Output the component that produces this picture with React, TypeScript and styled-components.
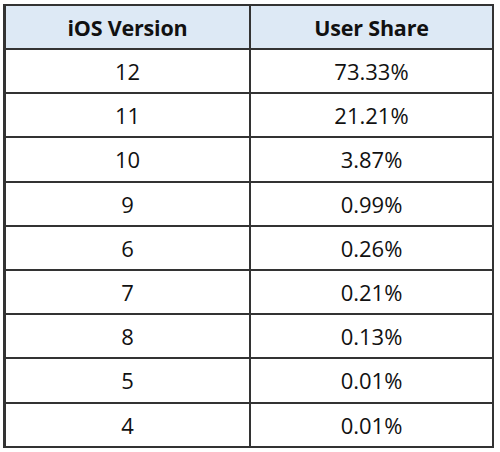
import React from "react";
import styled, { createGlobalStyle } from "styled-components";

const Global = createGlobalStyle`
  html, body { margin: 0; padding: 0; background: #ffffff; }
  body { width: 500px; height: 452px; overflow: hidden; }
`;

const Page = styled.div`
  padding: 4px 0 0 3px;
`;

const Table = styled.div`
  width: 491px;
  box-sizing: border-box;
  display: grid;
  grid-template-columns: 245px 1fr;
  border-left: 3px solid #333333;
  border-top: 2px solid #333333;
  border-right: 2px solid #333333;
  border-bottom: 2px solid #333333;
  font-family: "Open Sans", "Liberation Sans", sans-serif;
  color: #111111;
`;

const Cell = styled.div<{ $head?: boolean; $first?: boolean; $last?: boolean }>`
  height: ${(p) => (p.$head ? "42px" : "42.2px")};
  box-sizing: content-box;
  display: flex;
  align-items: center;
  justify-content: center;
  background: ${(p) => (p.$head ? "#dde9f5" : "#ffffff")};
  border-bottom: ${(p) => (p.$last ? "none" : "2px solid #333333")};
  border-right: ${(p) => (p.$first ? "2px solid #333333" : "none")};
  font-size: ${(p) => (p.$head ? "21.5px" : "22px")};
  font-weight: ${(p) => (p.$head ? 700 : 400)};
  letter-spacing: ${(p) => (p.$head ? "-0.2px" : "0")};
`;

const rows: [string, string][] = [
  ["12", "73.33%"],
  ["11", "21.21%"],
  ["10", "3.87%"],
  ["9", "0.99%"],
  ["6", "0.26%"],
  ["7", "0.21%"],
  ["8", "0.13%"],
  ["5", "0.01%"],
  ["4", "0.01%"],
];

export default function App() {
  return (
    <>
      <Global />
      <Page>
        <Table>
          <Cell $head $first>iOS Version</Cell>
          <Cell $head>User Share</Cell>
          {rows.map(([v, s], i) => (
            <React.Fragment key={i}>
              <Cell $first $last={i === rows.length - 1}>{v}</Cell>
              <Cell $last={i === rows.length - 1}>{s}</Cell>
            </React.Fragment>
          ))}
        </Table>
      </Page>
    </>
  );
}
